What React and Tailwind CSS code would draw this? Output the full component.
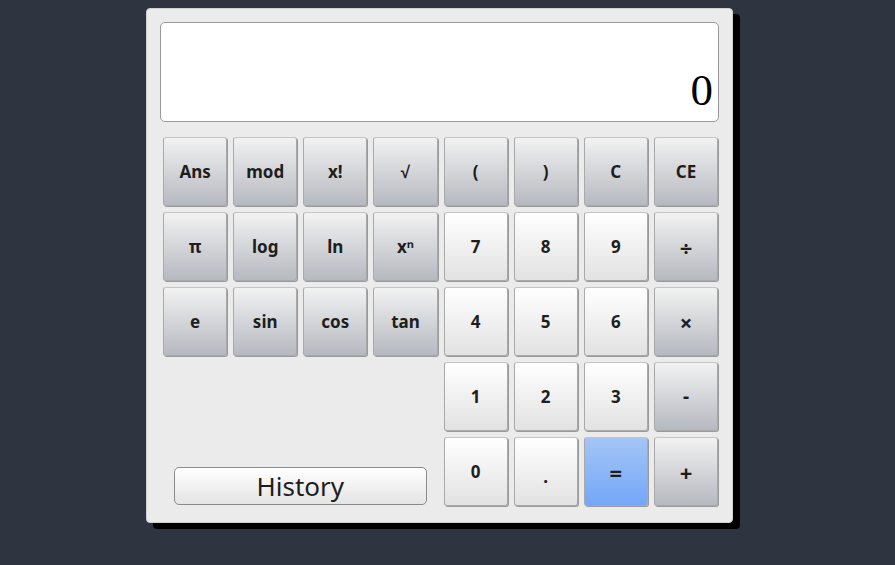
import React from "react";

const gray = "bg-gradient-to-b from-[#f2f2f2] to-[#b6b9c0]";
const white = "bg-gradient-to-b from-[#ffffff] to-[#e2e2e2]";
const blue = "bg-gradient-to-b from-[#a4c5f5] to-[#74a7f8]";

const big = (s) => <span className="text-[22px] leading-none">{s}</span>;

const rows = [
  [["Ans", gray], ["mod", gray], ["x!", gray], ["√", gray], ["(", gray], [")", gray], ["C", gray], ["CE", gray]],
  [["π", gray], ["log", gray], ["ln", gray], ["xⁿ", gray], ["7", white], ["8", white], ["9", white], [big("÷"), gray]],
  [["e", gray], ["sin", gray], ["cos", gray], ["tan", gray], ["4", white], ["5", white], ["6", white], [big("×"), gray]],
];

function Key({ label, cls }) {
  return (
    <button
      className={`m-[3px] rounded-[3px] border border-[#a9a9a9] border-t-[#c4c4c4] shadow-[1px_1px_0_#9a9a9a] ${cls} flex items-center justify-center text-[17px] font-bold text-[#1e1e1e] font-['Noto_Sans',sans-serif]`}
    >
      {label}
    </button>
  );
}

export default function App() {
  return (
    <div className="min-h-[565px] w-full bg-[#2e3541] pt-[8px] pl-[146px]">
      <div className="w-[587px] rounded-[4px] border border-[#d0d0d0] bg-[#ebebeb] p-[13px] pr-[11px] shadow-[7px_6px_0_#000]">
        <div className="mr-[2px] flex h-[100px] items-end justify-end rounded-[5px] border border-[#9a9a9a] bg-white pr-[5px] pb-[8px]">
          <span className="font-['Liberation_Serif',serif] text-[45px] leading-none text-black">0</span>
        </div>
        <div className="mt-[12px] grid grid-cols-8 grid-rows-[repeat(5,75px)]">
          {rows.flat().map(([l, c], i) => (
            <Key key={i} label={l} cls={c} />
          ))}
          <div className="col-span-4 row-span-2 flex items-end">
            <button className="mx-[14px] mb-[4px] h-[38px] w-full rounded-[5px] border border-[#8a8a8a] bg-gradient-to-b from-[#ffffff] to-[#e4e4e4] font-['Noto_Sans',sans-serif] text-[26px] leading-none text-[#1e1e1e]">
              History
            </button>
          </div>
          <div className="col-span-4 row-span-2 grid grid-cols-4 grid-rows-[repeat(2,75px)]">
            <Key label="1" cls={white} />
            <Key label="2" cls={white} />
            <Key label="3" cls={white} />
            <Key label={<span className="text-[19px]">-</span>} cls={gray} />
            <Key label="0" cls={white} />
            <Key label={<span className="pt-[10px]">.</span>} cls={white} />
            <Key label={big("=")} cls={blue} />
            <Key label={big("+")} cls={gray} />
          </div>
        </div>
      </div>
    </div>
  );
}
